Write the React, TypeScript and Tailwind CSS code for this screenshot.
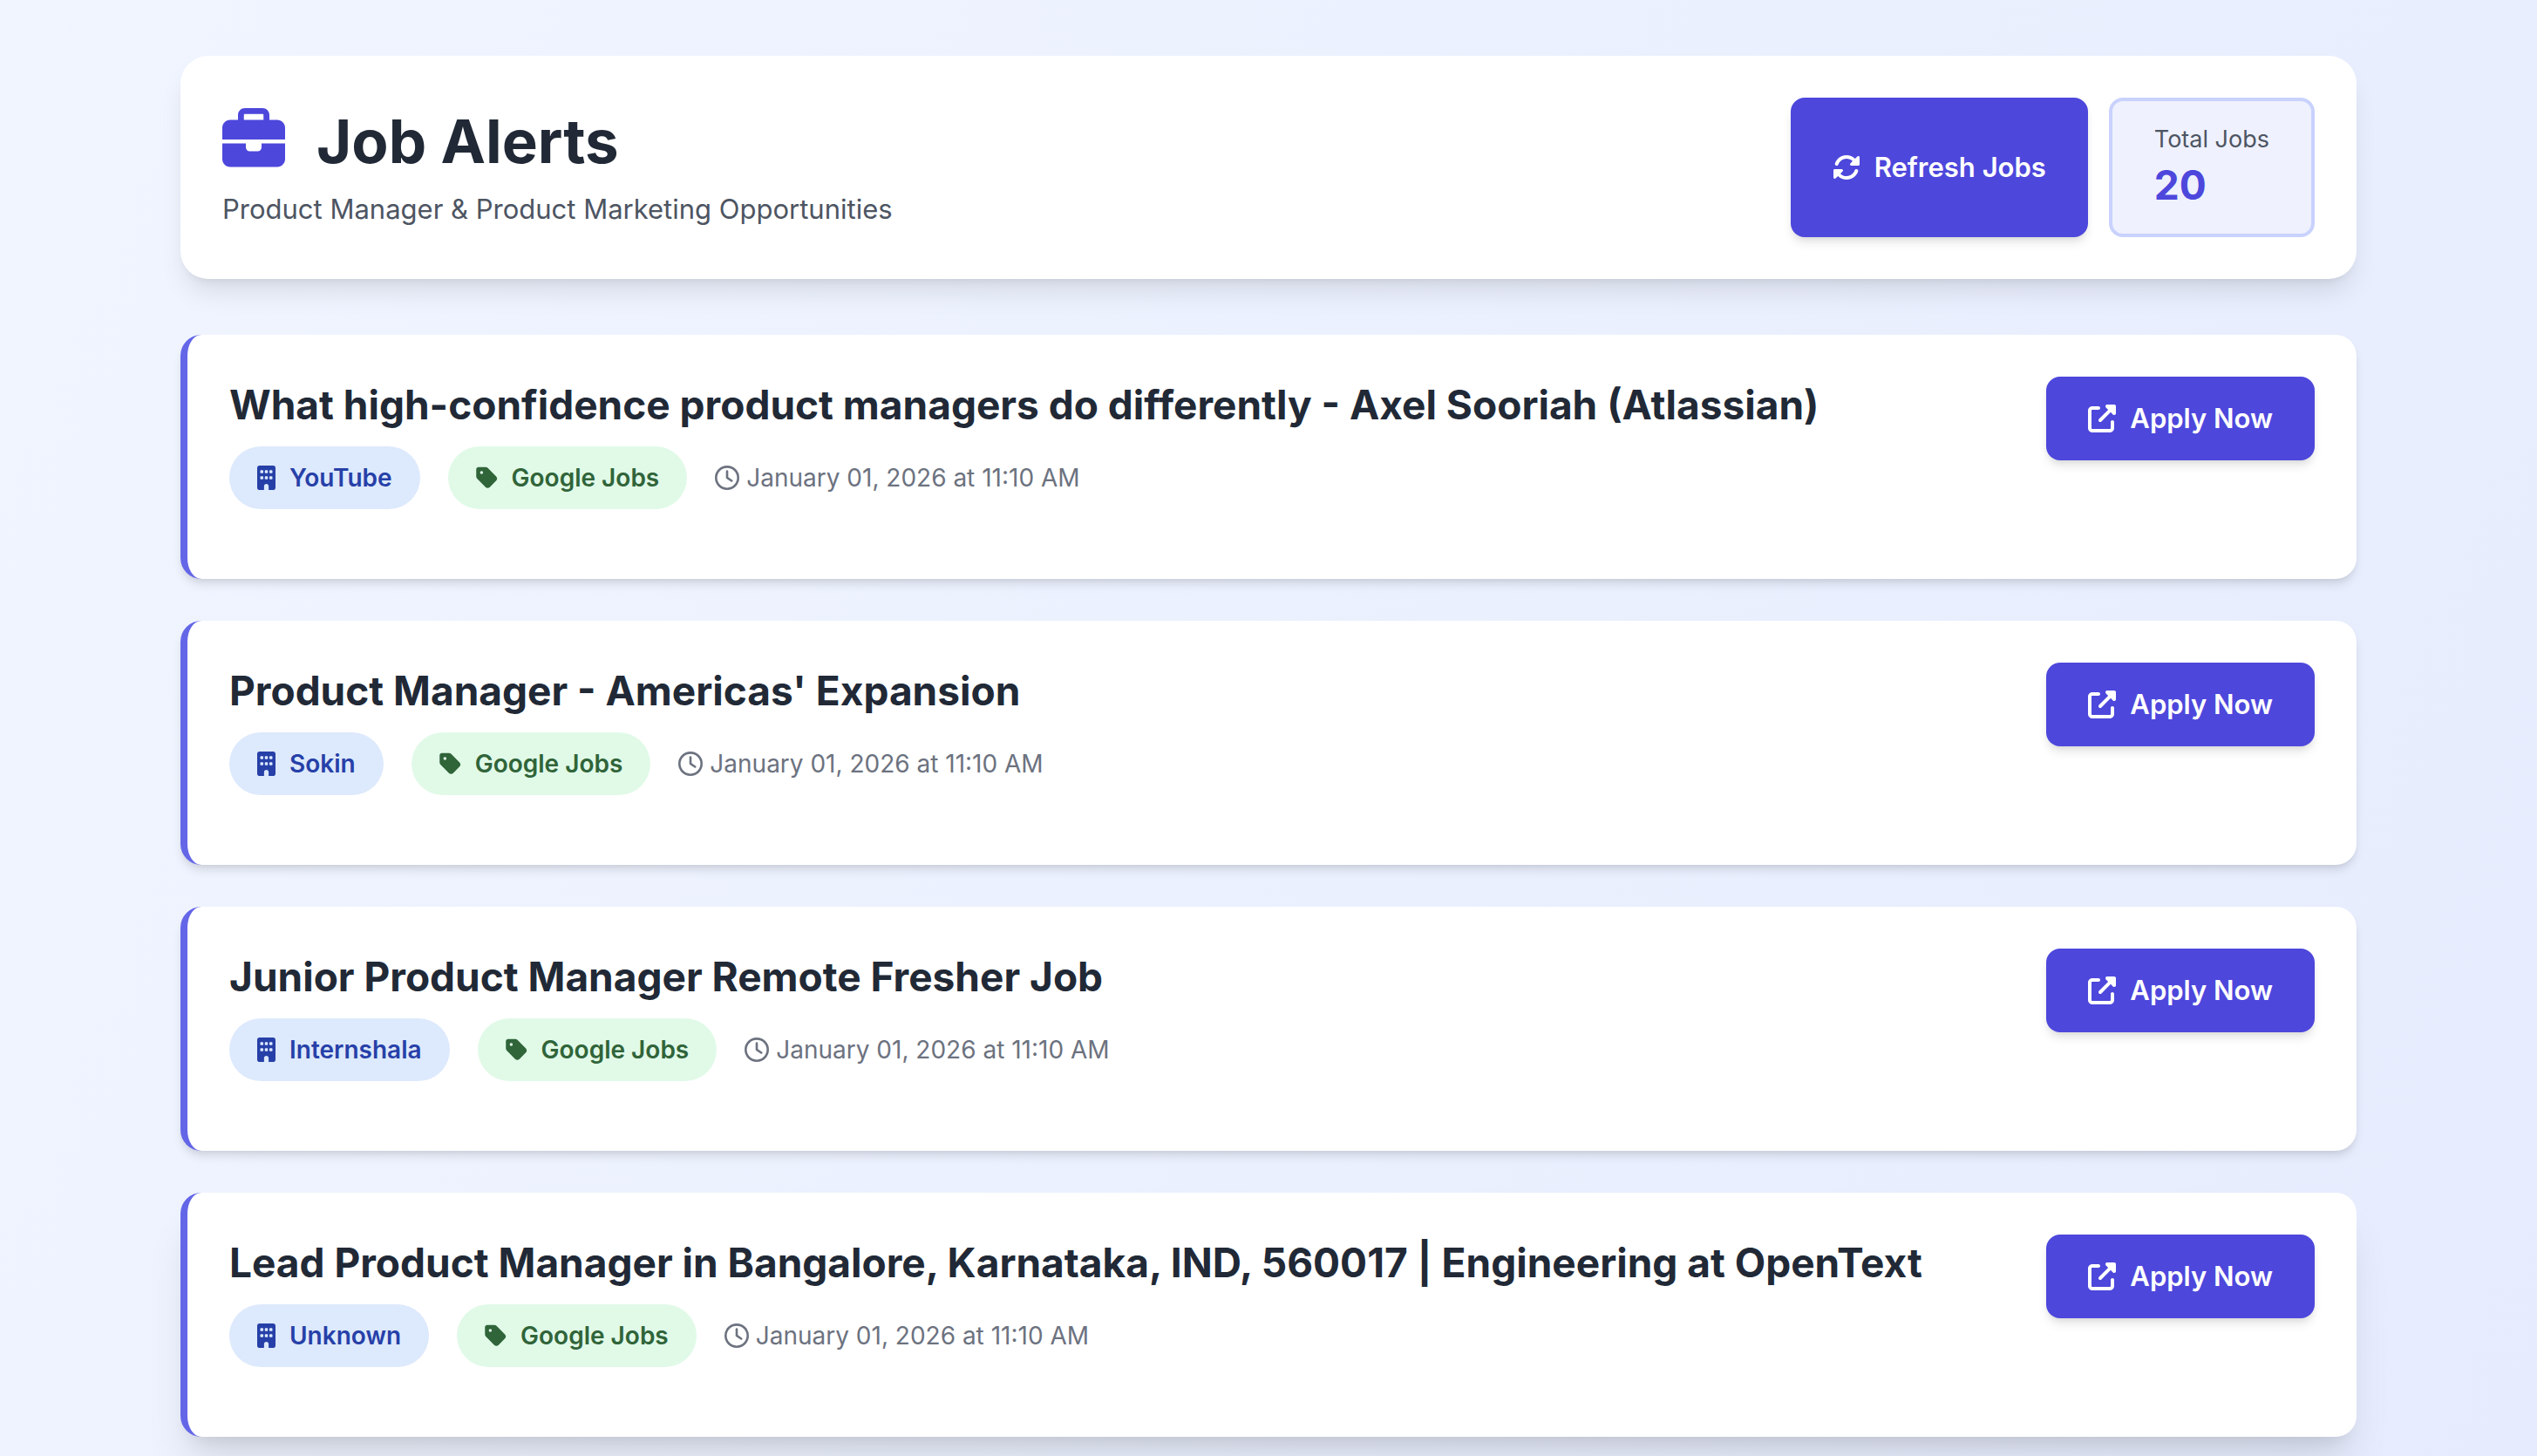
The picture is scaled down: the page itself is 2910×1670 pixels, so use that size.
import {
  FaBriefcase,
  FaBuilding,
  FaRegClock,
  FaRotate,
  FaTag,
  FaUpRightFromSquare,
} from "react-icons/fa6";

interface Job {
  title: string;
  company: string;
  source: string;
  postedAt: string;
  active?: boolean;
}

const jobs: Job[] = [
  { title: "What high-confidence product managers do differently - Axel Sooriah (Atlassian)", company: "YouTube", source: "Google Jobs", postedAt: "January 01, 2026 at 11:10 AM" },
  { title: "Product Manager - Americas' Expansion", company: "Sokin", source: "Google Jobs", postedAt: "January 01, 2026 at 11:10 AM" },
  { title: "Junior Product Manager Remote Fresher Job", company: "Internshala", source: "Google Jobs", postedAt: "January 01, 2026 at 11:10 AM" },
  { title: "Lead Product Manager in Bangalore, Karnataka, IND, 560017 | Engineering at OpenText", company: "Unknown", source: "Google Jobs", postedAt: "January 01, 2026 at 11:10 AM", active: true },
];

const CARD_SHADOW = "shadow-[0_8px_12px_-2px_rgba(0,0,0,0.1),0_4px_8px_-4px_rgba(0,0,0,0.1)]";
const CARD_SHADOW_ACTIVE = "shadow-[0_40px_50px_-10px_rgba(0,0,0,0.1),0_16px_20px_-12px_rgba(0,0,0,0.1)]";

const Header = ({ total }: { total: number }) => (
  <header className="flex items-center justify-between rounded-[32px] bg-white p-12 shadow-[0_20px_30px_-6px_rgba(0,0,0,0.1),0_8px_12px_-8px_rgba(0,0,0,0.1)]">
    <div>
      <h1 className="flex items-start gap-9 text-[69px] leading-[84px] font-bold text-[#212936]">
        <FaBriefcase className="mt-1 size-[72px] text-[#4d47dc]" />
        Job Alerts
      </h1>
      <p className="mt-3 text-[31px] leading-[48px] text-[#4d5562]">Product Manager &amp; Product Marketing Opportunities</p>
    </div>
    <div className="flex gap-6">
      <button className="flex items-center gap-4 rounded-2xl bg-[#4d47dc] px-12 text-[31px] leading-[48px] font-semibold text-white shadow-[0_8px_12px_-2px_rgba(0,0,0,0.1),0_4px_8px_-4px_rgba(0,0,0,0.1)]">
        <FaRotate className="size-8" />
        Refresh Jobs
      </button>
      <div className="rounded-2xl border-4 border-[#c9d2fc] bg-[#eff1fe] px-12 py-6">
        <p className="text-[27px] leading-[40px] text-[#4d5562]">Total Jobs</p>
        <p className="text-[46px] leading-[64px] font-bold text-[#4d47dc]">{total}</p>
      </div>
    </div>
  </header>
);

const JobCard = ({ job }: { job: Job }) => (
  <article className={`flex items-start justify-between rounded-3xl border-l-8 border-[#6466e8] bg-white p-12 ${job.active ? CARD_SHADOW_ACTIVE : CARD_SHADOW}`}>
    <div className="mb-8">
      <h2 className="mb-4 text-[46px] leading-[64px] font-bold text-[#212936]">{job.title}</h2>
      <div className="flex items-center gap-8 text-[28px] leading-[40px]">
        <span className="flex items-center gap-4 rounded-full bg-[#dde9fc] px-8 py-4 font-semibold text-[#2640a8]">
          <FaBuilding className="h-7 w-[21px]" />
          {job.company}
        </span>
        <span className="flex items-center gap-4 rounded-full bg-[#e1fae8] px-8 py-4 font-semibold text-[#306439]">
          <FaTag className="h-7 w-[25px]" />
          {job.source}
        </span>
        <span className="flex items-center gap-2 text-[#6c727f]">
          <FaRegClock className="size-7" />
          {job.postedAt}
        </span>
      </div>
    </div>
    <a href="#" className="flex shrink-0 items-center gap-4 rounded-2xl bg-[#4d47dc] px-12 py-6 text-[31px] leading-[48px] font-semibold text-white shadow-[0_8px_12px_-2px_rgba(0,0,0,0.1),0_4px_8px_-4px_rgba(0,0,0,0.1)]">
      <FaUpRightFromSquare className="size-8" />
      Apply Now
    </a>
  </article>
);

const App = () => (
  <div className="min-h-screen bg-[linear-gradient(113deg,#f0f5ff,#e6ecfd)] font-[Inter,sans-serif]">
    <div className="mx-auto max-w-[2560px] px-8 pt-16 pb-4">
      <Header total={20} />
      <main className="mt-16 space-y-12">
        {jobs.map((job) => (
          <JobCard key={job.title} job={job} />
        ))}
      </main>
    </div>
  </div>
);

export default App;
